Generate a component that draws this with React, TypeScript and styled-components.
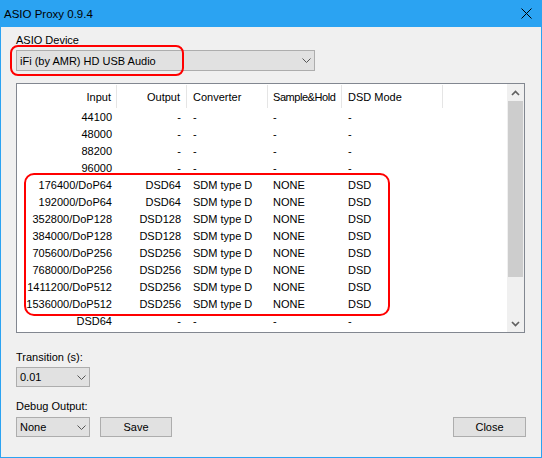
import React from "react";
import styled, { createGlobalStyle } from "styled-components";

const GlobalStyle = createGlobalStyle`
  html, body { margin: 0; padding: 0; background: #f0f0f0; }
  body { font-family: "Liberation Sans", Arial, sans-serif; font-size: 11px; color: #000; }
  * { box-sizing: border-box; }
`;

const ACCENT = "#2ba3f2";

const Window = styled.div`
  width: 542px;
  height: 458px;
  border: 1px solid ${ACCENT};
  border-top: none;
  background: #f0f0f0;
  display: flex;
  flex-direction: column;
`;

const TitleBar = styled.div`
  height: 27px;
  background: ${ACCENT};
  display: flex;
  align-items: center;
  justify-content: space-between;
  padding: 0 9px 0 3px;
  font-size: 11.5px;
  color: #000;
`;

const Content = styled.div`
  display: flex;
  flex-direction: column;
  padding: 0 15px;
`;

const Label = styled.div<{ $mt: number }>`
  margin-top: ${(p) => p.$mt}px;
  line-height: 13px;
  height: 13px;
`;

const ComboWrap = styled.div<{ $mt: number }>`
  position: relative;
  margin-top: ${(p) => p.$mt}px;
`;

const Combo = styled.div<{ $w: number; $h: number }>`
  width: ${(p) => p.$w}px;
  height: ${(p) => p.$h}px;
  border: 1px solid #adadad;
  background: #e1e1e1;
  display: flex;
  align-items: center;
  padding-left: 3px;
`;

const ComboText = styled.span`
  flex: 1;
  white-space: nowrap;
`;

const DropArea = styled.span`
  width: 16px;
  height: 100%;
  display: flex;
  align-items: center;
  justify-content: center;
`;

const Highlight = styled.div<{ $l: number; $t: number; $w: number; $h: number; $r: number }>`
  position: absolute;
  left: ${(p) => p.$l}px;
  top: ${(p) => p.$t}px;
  width: ${(p) => p.$w}px;
  height: ${(p) => p.$h}px;
  border: 2px solid #ff0000;
  border-radius: ${(p) => p.$r}px;
  pointer-events: none;
`;

const ListBox = styled.div`
  margin-top: 12px;
  width: 509px;
  height: 250px;
  border: 1px solid #828790;
  background: #fff;
  display: flex;
`;

const ListMain = styled.div`
  flex: 1;
  position: relative;
  overflow: hidden;
`;

const COLS = "100px 70px 81px 74px 101px";

const HeaderRow = styled.div`
  display: grid;
  grid-template-columns: ${COLS};
  height: 25px;
`;

const HeaderCell = styled.div<{ $right?: boolean; $pad: number; $tight?: boolean }>`
  display: flex;
  align-items: center;
  justify-content: ${(p) => (p.$right ? "flex-end" : "flex-start")};
  ${(p) => (p.$right ? `padding-right: ${p.$pad}px;` : `padding-left: ${p.$pad}px;`)}
  letter-spacing: ${(p) => (p.$tight ? "-0.45px" : "0")};
  border-right: 1px solid #e5e5e5;
  margin: 1px 0 1px;
  white-space: nowrap;
`;

const Row = styled.div`
  display: grid;
  grid-template-columns: ${COLS};
  height: 17px;
  align-items: center;
`;

const Cell = styled.div<{ $right?: boolean; $pad: number }>`
  text-align: ${(p) => (p.$right ? "right" : "left")};
  ${(p) => (p.$right ? `padding-right: ${p.$pad}px;` : `padding-left: ${p.$pad}px;`)}
  white-space: nowrap;
  line-height: 17px;
`;

const ScrollBar = styled.div`
  width: 17px;
  background: #f0f0f0;
  display: flex;
  flex-direction: column;
`;

const ScrollBtn = styled.div`
  height: 17px;
  display: flex;
  align-items: center;
  justify-content: center;
`;

const Thumb = styled.div`
  height: 176px;
  margin: 0 1px;
  background: #cdcdcd;
`;

const Track = styled.div`
  flex: 1;
`;

const BottomRow = styled.div`
  margin-top: 4px;
  display: flex;
  align-items: center;
  gap: 10px;
`;

const Button = styled.button<{ $w: number; $push?: boolean }>`
  width: ${(p) => p.$w}px;
  height: 20px;
  border: 1px solid #adadad;
  background: #e1e1e1;
  font: inherit;
  color: #000;
  padding: 0;
  margin-left: ${(p) => (p.$push ? "auto" : "0")};
`;

const Chevron = () => (
  <svg width="9" height="5" viewBox="0 0 9 5">
    <polyline points="0.5,0.5 4.5,4.5 8.5,0.5" fill="none" stroke="#555" strokeWidth="1" />
  </svg>
);

const ScrollArrow = ({ up }: { up?: boolean }) => (
  <svg width="9" height="6" viewBox="0 0 9 6">
    <polyline
      points={up ? "1,5 4.5,1.5 8,5" : "1,1 4.5,4.5 8,1"}
      fill="none"
      stroke="#606060"
      strokeWidth="1.7"
    />
  </svg>
);

const CloseX = () => (
  <svg width="11" height="11" viewBox="0 0 11 11">
    <line x1="0.5" y1="0.5" x2="10.5" y2="10.5" stroke="#000" strokeWidth="1" />
    <line x1="10.5" y1="0.5" x2="0.5" y2="10.5" stroke="#000" strokeWidth="1" />
  </svg>
);

type R = [string, string, string, string, string];
const rows: R[] = [
  ["44100", "-", "-", "-", "-"],
  ["48000", "-", "-", "-", "-"],
  ["88200", "-", "-", "-", "-"],
  ["96000", "-", "-", "-", "-"],
  ["176400/DoP64", "DSD64", "SDM type D", "NONE", "DSD"],
  ["192000/DoP64", "DSD64", "SDM type D", "NONE", "DSD"],
  ["352800/DoP128", "DSD128", "SDM type D", "NONE", "DSD"],
  ["384000/DoP128", "DSD128", "SDM type D", "NONE", "DSD"],
  ["705600/DoP256", "DSD256", "SDM type D", "NONE", "DSD"],
  ["768000/DoP256", "DSD256", "SDM type D", "NONE", "DSD"],
  ["1411200/DoP512", "DSD256", "SDM type D", "NONE", "DSD"],
  ["1536000/DoP512", "DSD256", "SDM type D", "NONE", "DSD"],
  ["DSD64", "-", "-", "-", "-"],
];

const colSpec: { right: boolean; pad: number }[] = [
  { right: true, pad: 5 },
  { right: true, pad: 6 },
  { right: false, pad: 6 },
  { right: false, pad: 5 },
  { right: false, pad: 6 },
];

const headers = ["Input", "Output", "Converter", "Sample&Hold", "DSD Mode"];

export default function App() {
  return (
    <>
      <GlobalStyle />
      <Window>
        <TitleBar>
          <span>ASIO Proxy 0.9.4</span>
          <CloseX />
        </TitleBar>
        <Content>
          <Label $mt={7}>ASIO Device</Label>
          <ComboWrap $mt={3}>
            <Combo $w={299} $h={21}>
              <ComboText>iFi (by AMR) HD USB Audio</ComboText>
              <DropArea>
                <Chevron />
              </DropArea>
            </Combo>
            <Highlight $l={-6} $t={-5} $w={174} $h={31} $r={8} />
          </ComboWrap>

          <ListBox>
            <ListMain>
              <HeaderRow>
                {headers.map((h, i) => (
                  <HeaderCell
                    key={h}
                    $right={colSpec[i].right}
                    $pad={colSpec[i].pad}
                    $tight={h === "Sample&Hold"}
                  >
                    {h}
                  </HeaderCell>
                ))}
              </HeaderRow>
              {rows.map((r, ri) => (
                <Row key={ri}>
                  {r.map((c, ci) => (
                    <Cell key={ci} $right={colSpec[ci].right} $pad={colSpec[ci].pad}>
                      {c}
                    </Cell>
                  ))}
                </Row>
              ))}
              <Highlight $l={7} $t={89} $w={366} $h={143} $r={10} />
            </ListMain>
            <ScrollBar>
              <ScrollBtn>
                <ScrollArrow up />
              </ScrollBtn>
              <Thumb />
              <Track />
              <ScrollBtn>
                <ScrollArrow />
              </ScrollBtn>
            </ScrollBar>
          </ListBox>

          <Label $mt={18}>Transition (s):</Label>
          <ComboWrap $mt={3}>
            <Combo $w={74} $h={20}>
              <ComboText>0.01</ComboText>
              <DropArea>
                <Chevron />
              </DropArea>
            </Combo>
          </ComboWrap>

          <Label $mt={13}>Debug Output:</Label>
          <BottomRow>
            <Combo $w={74} $h={20}>
              <ComboText>None</ComboText>
              <DropArea>
                <Chevron />
              </DropArea>
            </Combo>
            <Button $w={72}>Save</Button>
            <Button $w={73} $push>
              Close
            </Button>
          </BottomRow>
        </Content>
      </Window>
    </>
  );
}
